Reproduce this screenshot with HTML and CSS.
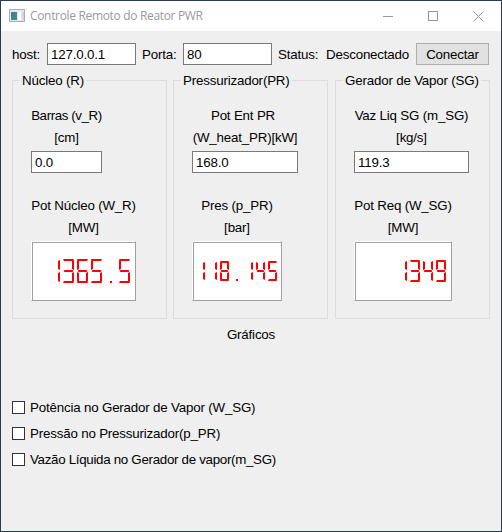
FILE: index.html
```html
<!DOCTYPE html>
<html lang="pt">
<head>
<meta charset="utf-8">
<title>Controle Remoto do Reator PWR</title>
<link rel="stylesheet" href="styles.css">
</head>
<body>
<div class="window">
  <header class="titlebar">
    <svg class="app-icon" width="16" height="16" viewBox="0 0 16 16"><rect x=".5" y="1.5" width="15" height="12" fill="#e6e9ec" stroke="#a9aeb4"/><rect x="2" y="4" width="6" height="8" fill="#3f8c86"/><rect x="2" y="4" width="3" height="4" fill="#4877a8"/><rect x="9" y="4" width="3" height="8" fill="#fff"/><rect x="13" y="4" width="2" height="8" fill="#cfd3d7"/></svg>
    <span class="title">Controle Remoto do Reator PWR</span>
    <svg class="controls" width="101" height="11" viewBox="0 0 101 11"><path d="M0 5.5H10M45.5.5h9v9h-9z" fill="none" stroke="#999" shape-rendering="crispEdges"/><path d="M100.5 .5l-10 10M90.5 .5l10 10" fill="none" stroke="#999"/></svg>
  </header>
  <main class="content">
    <div class="connection">
      <label class="c-host">host:</label><input class="field" value="127.0.0.1">
      <label class="c-port">Porta:</label><input class="field" value="80">
      <span class="c-status">Status:</span><span class="c-state">Desconectado</span>
      <button class="connect">Conectar</button>
    </div>
    <div class="groups">
      <section class="group core">
        <h2>Núcleo (R)</h2>
        <div class="item"><p class="tight">Barras (v_R)</p><p>[cm]</p><input class="field" size="1" value="0.0"></div>
        <div class="item"><p>Pot Núcleo (W_R)</p><p>[MW]</p><div class="lcd" data-value="1365.5" data-width="11" data-height="24" role="img" aria-label="1365.5"></div></div>
      </section>
      <section class="group press">
        <h2>Pressurizador(PR)</h2>
        <div class="item"><p class="first-line">Pot Ent PR</p><p>(W_heat_PR)[kW]</p><input class="field" size="1" value="168.0"></div>
        <div class="item"><p>Pres (p_PR)</p><p>[bar]</p><div class="lcd" data-value="118.145" data-width="9" data-height="20" role="img" aria-label="118.145"></div></div>
      </section>
      <section class="group steam">
        <h2>Gerador de Vapor (SG)</h2>
        <div class="item"><p>Vaz Liq SG (m_SG)</p><p>[kg/s]</p><input class="field" size="1" value="119.3"></div>
        <div class="item"><p>Pot Req (W_SG)</p><p>[MW]</p><div class="lcd" data-value="1349" data-width="10" data-height="22" role="img" aria-label="1349"></div></div>
      </section>
    </div>
    <p class="charts">Gráficos</p>
    <div class="checks">
      <label><input type="checkbox"><span>Potência no Gerador de Vapor (W_SG)</span></label>
      <label><input type="checkbox"><span>Pressão no Pressurizador(p_PR)</span></label>
      <label><input type="checkbox"><span class="narrow">Vazão Líquida no Gerador de vapor(m_SG)</span></label>
    </div>
  </main>
</div>
<script src="lcd.js"></script>
</body>
</html>
```
FILE: styles.css
```css
* { box-sizing: border-box; }
body { margin: 0; font: 13.33px/22px "Liberation Sans", Arial, sans-serif; letter-spacing: -0.18px; color: #000; }
p, h2 { margin: 0; font-size: inherit; font-weight: normal; white-space: nowrap; }
.window { width: 502px; height: 532px; border: 1px solid #2a3a58; background: #efefef; overflow: hidden; }
.titlebar { height: 30px; background: #fff; display: flex; align-items: center; padding: 0 17px 0 8px; }
.app-icon { margin-right: 5px; }
.title { font: 12px/20px "Open Sans", sans-serif; letter-spacing: -0.33px; color: #999; flex: 1; }
.content { padding: 12px 11px; }
.connection { display: flex; height: 22px; white-space: nowrap; }
.connection label, .connection span { padding-top: 1px; }
.field { font: inherit; letter-spacing: inherit; height: 22px; border: 1px solid #7a7a7a; background: #fff; padding: 1px 0 0 3px; margin: 0; outline: 0; border-radius: 0; display: block; min-width: 0; }
.connection .field { width: 89px; margin-right: 6px; }
.c-host { width: 35px; }
.c-port { width: 41px; }
.c-status { width: 48px; }
.c-state { width: 90px; }
.connect { font: inherit; letter-spacing: inherit; line-height: 19px; width: 73px; height: 22px; border: 1px solid #adadad; background: #e1e1e1; padding: 1px 0 0; border-radius: 0; }
.groups { display: grid; grid-template-columns: 161px 162px 155px; margin-top: 15px; }
.group { width: 155px; height: 239px; border: 1px solid #dcdcdc; padding: 0 0 0 18px; }
.group h2 { width: max-content; height: 22px; margin: -12px 0 0 -11px; padding: 1px 2px 0; background: #efefef; }
.item { text-align: center; margin-top: 13px; }
.item p { height: 22px; padding-top: 1px; }
.item .field { width: 100%; margin-top: 3px; }
.item + .item { margin-top: 21px; }
.core .item { width: 71px; }
.core .item + .item { width: 105px; }
.press .item { width: 106px; }
.press .item + .item { width: 90px; }
.steam .item { width: 115px; }
.steam .item + .item { width: 98px; }
.tight { letter-spacing: -0.4px; }
.item .first-line { padding-right: 4px; }
.narrow { letter-spacing: -0.3px; }
.lcd { margin-top: 3px; height: 60px; background: #fff; border: 1px solid; border-color: #fff #a0a0a0 #a0a0a0 #fff; box-shadow: inset 1px 1px #a0a0a0; display: flex; align-items: center; justify-content: flex-end; padding-right: 5px; }
.press .lcd { padding-right: 4px; }
.charts { text-align: center; margin-top: 5px; }
.checks { display: grid; row-gap: 4px; margin-top: 50px; }
.checks label { display: flex; align-items: center; height: 22px; }
.checks span { padding-top: 2px; }
.checks input { appearance: none; width: 13px; height: 13px; margin: 0 5px 0 0; border: 1px solid #333; background: #fff; }
```
FILE: lcd.js
```js
// Seven-segment readouts: segment letters lit for each digit.
const LIT = { 1: 'bc', 3: 'abcdg', 4: 'bcfg', 5: 'acdfg', 6: 'acdefg', 8: 'abcdefg', 9: 'abcdfg', '.': 'p' };
const GAP = 3;
document.querySelectorAll('.lcd').forEach(el => {
  const w = +el.dataset.width, h = +el.dataset.height, m = h / 2, text = el.dataset.value;
  const dot = Math.floor(w / 2);
  const seg = {
    a: `0,0 ${w},0 ${w - 1},2 1,2`,
    b: `${w},1 ${w},${m - 1} ${w - 2},${m - 2} ${w - 2},2`,
    c: `${w},${m + 1} ${w},${h - 1} ${w - 2},${h - 2} ${w - 2},${m + 2}`,
    d: `0,${h} ${w},${h} ${w - 1},${h - 2} 1,${h - 2}`,
    e: `0,${m + 1} 0,${h - 1} 2,${h - 2} 2,${m + 2}`,
    f: `0,1 0,${m - 1} 2,${m - 2} 2,2`,
    g: `0.5,${m} 1.5,${m - 1} ${w - 1.5},${m - 1} ${w - 0.5},${m} ${w - 1.5},${m + 1} 1.5,${m + 1}`,
    p: `${dot},${h - 2} ${dot + 2},${h - 2} ${dot + 2},${h} ${dot},${h}`
  };
  const total = text.length * (w + GAP) - GAP;
  let out = '';
  [...text].forEach((ch, i) => {
    for (const s of LIT[ch]) out += `<polygon transform="translate(${i * (w + GAP)} 0)" points="${seg[s]}"/>`;
  });
  el.innerHTML = `<svg width="${total}" height="${h}" fill="#f00">${out}</svg>`;
});
```
